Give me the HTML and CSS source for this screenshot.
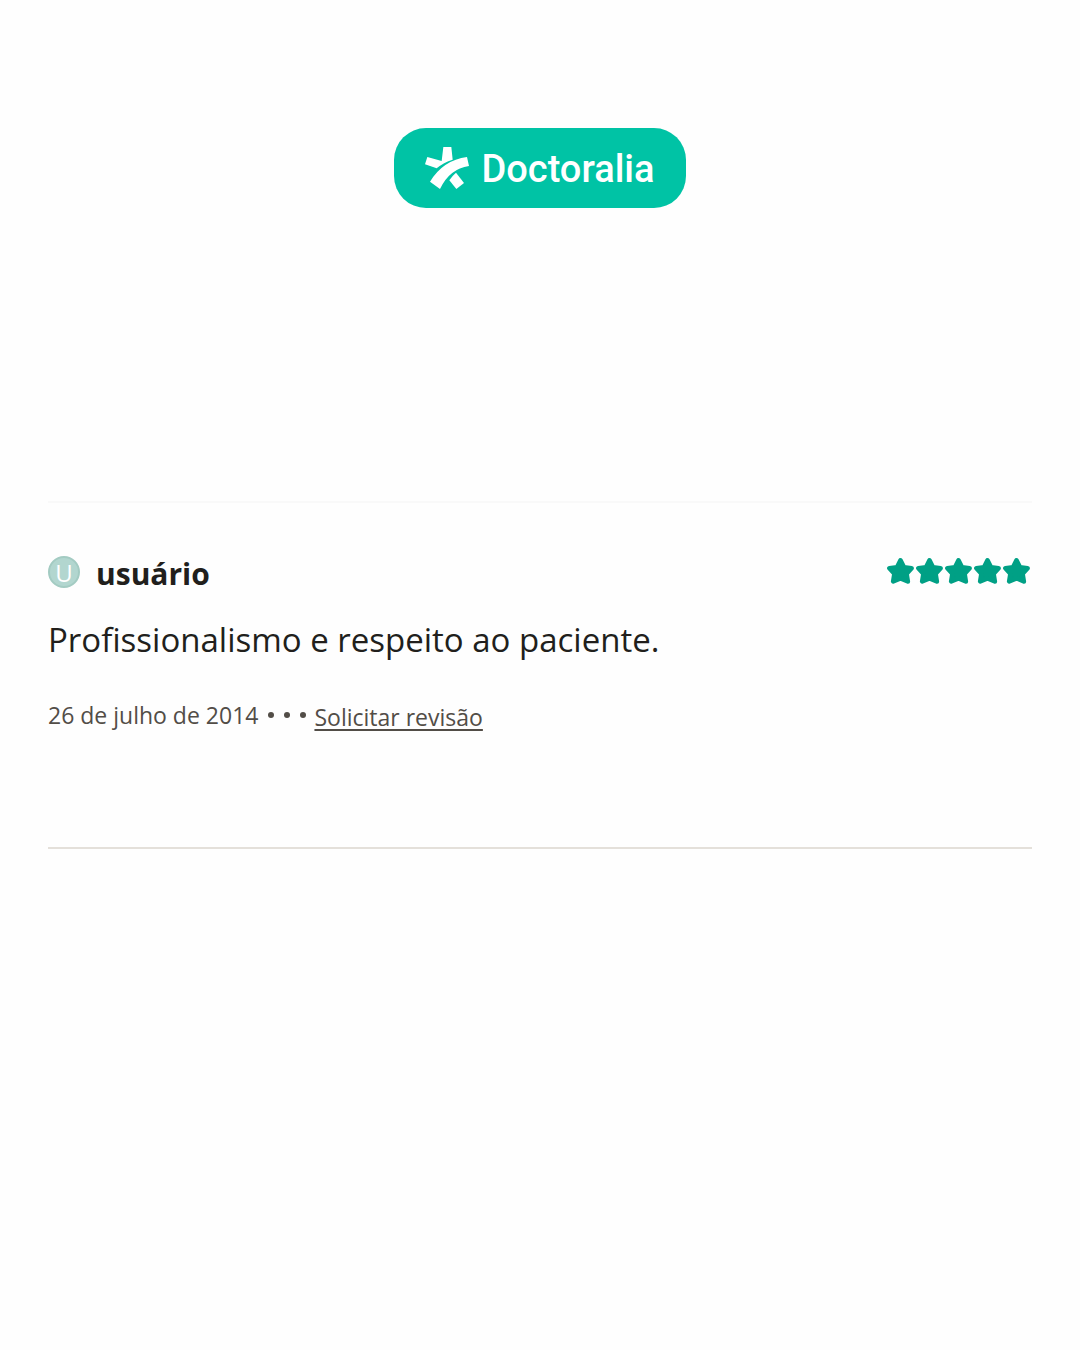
FILE: index.html
```html
<!DOCTYPE html>
<html lang="pt-BR">
<head>
    <meta charset="UTF-8">
    <title>Doctoralia</title>
    <meta name="viewport" content="width=device-width, initial-scale=1">
    <link rel="stylesheet" href="styles.css">
</head>
<body>
    <header class="header">
        <div class="brand">
            <svg class="brand-mark" viewBox="30 36 132 126" aria-hidden="true">
                <path d="M85 36H109L113 74Q86 82 65 100L30 88L37 66L80 78Z"/>
                <path d="M45 140Q85 75 156 66L162 93Q104 101 75 162Z"/>
                <path d="M123 113L147 144L124 162L103 136Q112 122 123 113Z"/>
            </svg>
            <span class="brand-name">Doctoralia</span>
        </div>
    </header>

    <main class="review">
        <div class="review-head">
            <span class="avatar">U</span>
            <h1 class="author">usuário</h1>
            <div class="stars" role="img" aria-label="5 de 5">
                <svg viewBox="0 0 29 28"><use href="#star"/></svg>
                <svg viewBox="0 0 29 28"><use href="#star"/></svg>
                <svg viewBox="0 0 29 28"><use href="#star"/></svg>
                <svg viewBox="0 0 29 28"><use href="#star"/></svg>
                <svg viewBox="0 0 29 28"><use href="#star"/></svg>
            </div>
        </div>
        <p class="comment">Profissionalismo e respeito ao paciente.</p>
        <div class="meta">
            <time datetime="2014-07-26">26 de julho de 2014</time>
            <span class="dot"></span>
            <span class="dot"></span>
            <span class="dot"></span>
            <a class="report" href="#">Solicitar revisão</a>
        </div>
    </main>

    <svg class="sprite" aria-hidden="true">
        <symbol id="star" viewBox="0 0 29 28">
            <path d="M13.5 2.4L17 9.2L24.6 10.2L19.600 15.800L20.800 23.400L13.500 20.300L6.200 23.400L7.400 15.800L2.400 10.200L10 9.200Z" stroke-width="4.6" stroke-linejoin="round"/>
        </symbol>
    </svg>
</body>
</html>
```
FILE: styles.css
```css
* {
    box-sizing: border-box;
    margin: 0;
    padding: 0;
}
body {
    font-family: 'Segoe UI', 'Open Sans', 'Noto Sans', sans-serif;
    background: #fefefe;
    color: #211f1c;
    min-height: 100vh;
    display: grid;
    grid-template-rows: 1fr auto 1fr;
    padding: 0 48px;
}
/* Brand */
.header {
    display: flex;
    justify-content: center;
    align-items: flex-start;
    padding-top: 128px;
}
.brand {
    display: flex;
    align-items: center;
    gap: 12px;
    height: 80px;
    padding: 0 31px;
    border-radius: 32px;
    background: #00c3a5;
    color: #fff;
}
.brand-mark {
    width: 44px;
    height: 42px;
    fill: #fff;
}
.brand-name {
    padding-top: 2px;
    font-family: Roboto, sans-serif;
    font-size: 38px;
    font-weight: 500;
    line-height: 48px;
}
/* Review */
.review {
    border-top: 2px solid #f9f9f9;
    border-bottom: 2px solid #e4e0da;
    padding: 47px 0 110px;
}
.review-head {
    display: flex;
    align-items: center;
    height: 44px;
}
.avatar {
    width: 32px;
    height: 32px;
    border: 2px solid #a3cbc2;
    border-radius: 50%;
    background: #b2d6cf;
    color: #fff;
    font-size: 24px;
    line-height: 30px;
    text-align: center;
}
.author {
    margin-left: 16px;
    padding-top: 4px;
    font-size: 30px;
    line-height: 44px;
}
.stars {
    display: flex;
    margin-left: auto;
}
.stars svg {
    width: 29px;
    height: 28px;
    fill: #00a085;
    stroke: #00a085;
}
.comment {
    margin: 20px 0 27px;
    font-size: 33px;
    line-height: 52px;
}
.meta {
    display: flex;
    align-items: center;
    color: #524d47;
    font-size: 23px;
    line-height: 40px;
}
.dot {
    width: 6px;
    height: 6px;
    margin-left: 10px;
    border-radius: 50%;
    background: #524d47;
}
.report {
    margin-left: 8px;
    padding-top: 4px;
    color: #524d47;
    text-decoration-thickness: 2px;
    text-underline-offset: 3px;
}
.sprite {
    display: none;
}
```
